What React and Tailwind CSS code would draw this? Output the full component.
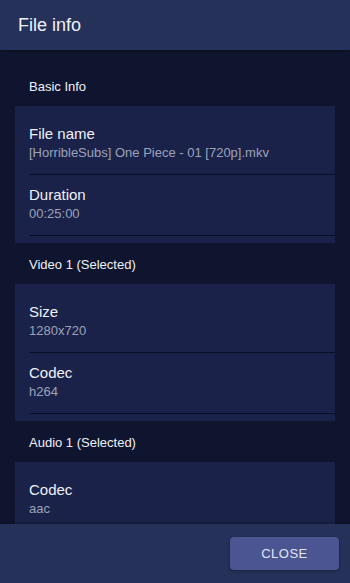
const sections = [
  {
    title: "Basic Info",
    rows: [
      { label: "File name", value: "[HorribleSubs] One Piece - 01 [720p].mkv" },
      { label: "Duration", value: "00:25:00" },
    ],
  },
  {
    title: "Video 1 (Selected)",
    rows: [
      { label: "Size", value: "1280x720" },
      { label: "Codec", value: "h264" },
    ],
  },
  {
    title: "Audio 1 (Selected)",
    rows: [{ label: "Codec", value: "aac" }],
  },
];

function InfoRow({ label, value }) {
  return (
    <div className="ml-[14px] pt-[10px] pb-[12px] border-b border-[#0b0f24]">
      <div className="text-[15px] leading-5 text-[#eef0f7]">{label}</div>
      <div className="text-[13px] leading-[18px] text-[#9ca2b9]">{value}</div>
    </div>
  );
}

export default function App() {
  return (
    <div
      className="w-[350px] h-[583px] flex flex-col bg-[#10152f] overflow-hidden"
      style={{ fontFamily: '"Liberation Sans", Arial, sans-serif' }}
    >
      {/* Header */}
      <div className="h-[50px] shrink-0 bg-[#26315a] pl-[18px] text-[18px] leading-[50px] text-[#eef0f7] shadow-[0_1px_2px_rgba(0,0,0,0.35)] z-10">
        File info
      </div>

      {/* Content */}
      <div className="flex-1 overflow-hidden px-[15px] pt-[15px]">
        {sections.map((s) => (
          <div key={s.title}>
            <div className="pl-[14px] pt-[13px] pb-[10px] text-[13px] leading-[18px] text-[#eef0f7]">
              {s.title}
            </div>
            <div className="bg-[#1b2249] pt-2 pb-[7px]">
              {s.rows.map((r) => (
                <InfoRow key={r.label} label={r.label} value={r.value} />
              ))}
            </div>
          </div>
        ))}
      </div>

      {/* Footer */}
      <div className="h-[59px] shrink-0 bg-[#26315a] flex items-center justify-end pr-[11px] shadow-[0_-1px_2px_rgba(0,0,0,0.3)] z-10">
        <button className="w-[109px] h-[33px] rounded bg-[#4a5591] text-[13px] tracking-[0.5px] text-[#e3e6f3] shadow-[0_1px_3px_rgba(0,0,0,0.35)]">
          CLOSE
        </button>
      </div>
    </div>
  );
}
